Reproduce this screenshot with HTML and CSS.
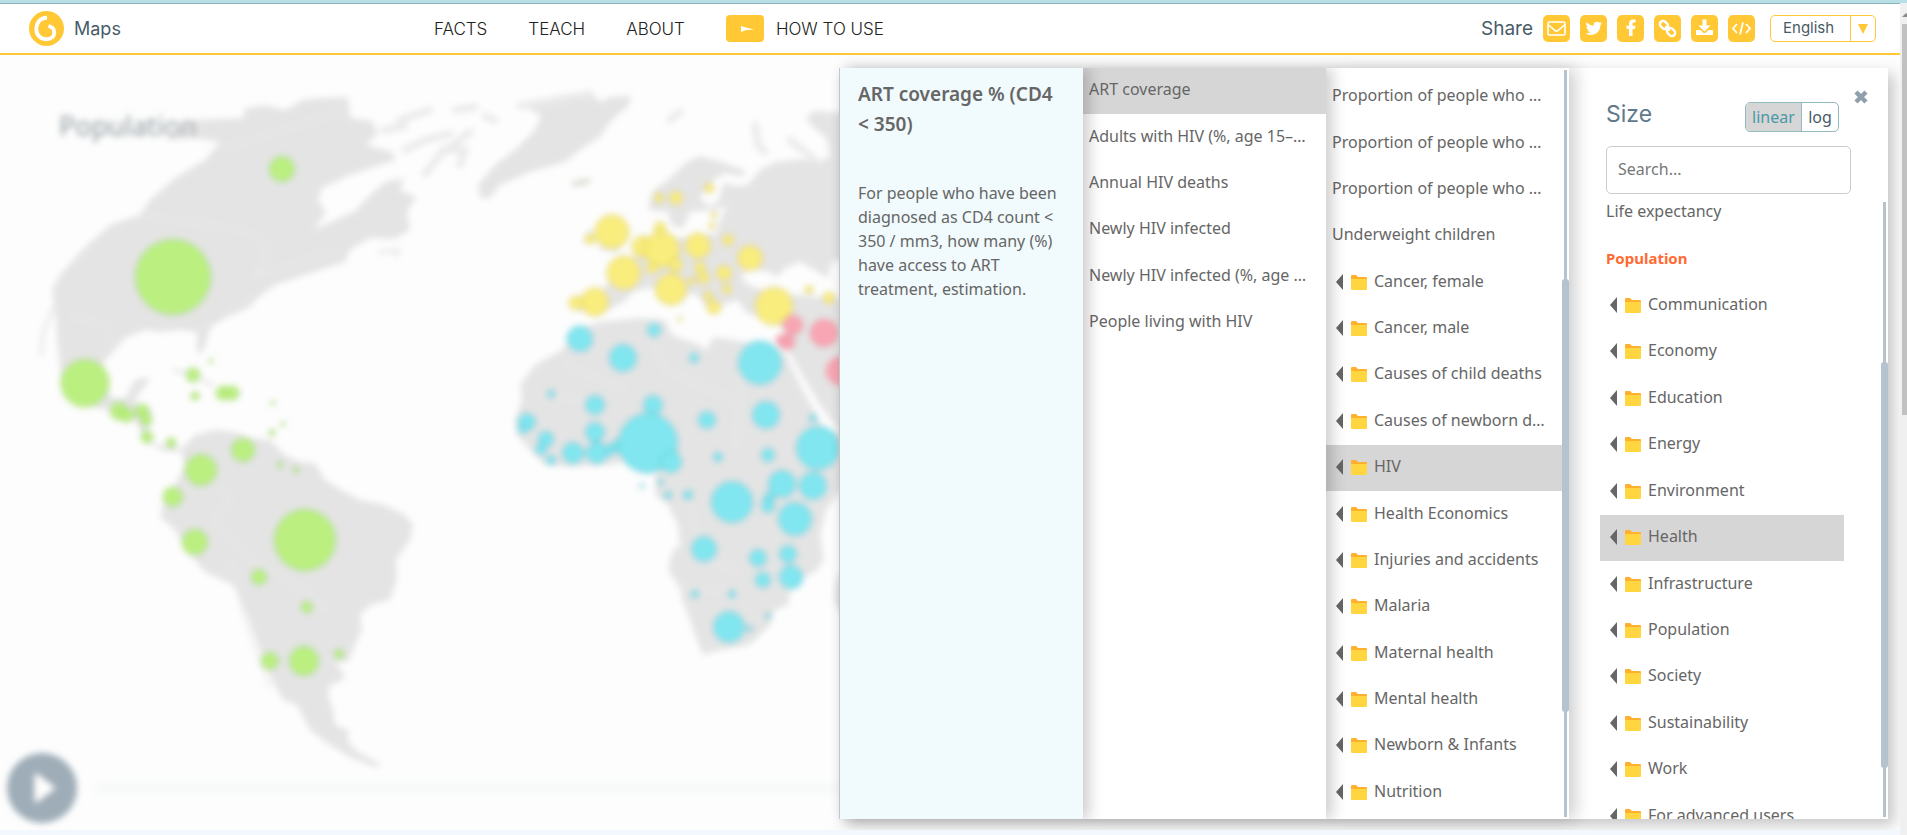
FILE: index.html
```html
<!DOCTYPE html>
<html lang="en">
<head>
<meta charset="utf-8">
<title>Maps</title>
<link rel="stylesheet" href="styles.css">
</head>
<body>
<svg class="defs" aria-hidden="true">
  <symbol id="folder" viewBox="0 0 31 16">
    <path d="M7 0v16L0 8z" fill="#666"/>
    <path d="M15 2q0-1 1-1h4l2 2h8q1 0 1 1v4H15z" fill="#ffb02e"/>
    <path d="M15 5h15q1 0 1 1V15q0 1-1 1H16q-1 0-1-1z" fill="#ffd640"/>
  </symbol>
</svg>
<div class="page">
  <div class="content">
    <header class="header">
      <a class="brand" href="#">
        <svg class="logo" viewBox="0 0 36 36" aria-hidden="true">
          <circle cx="18" cy="18" r="18" fill="#ffc834"/>
          <path d="M18.500 7C10 7 7.500 14 7.500 18.500C7.500 25 12 29 17.500 29C23.500 29 26 25.500 26 22C26 18.500 23.500 16 20 15.500" fill="none" stroke="#fff" stroke-width="4"/>
        </svg>
        <span>Maps</span>
      </a>
      <nav class="nav">
        <a href="#">FACTS</a>
        <a href="#">TEACH</a>
        <a href="#">ABOUT</a>
        <a class="how" href="#">
          <svg viewBox="0 0 38 27" aria-hidden="true"><rect width="38" height="27" rx="4" fill="#ffc834"/><path d="M15 11l5 1.500l8 2l-8 .5l-5 2z" fill="#fff"/></svg>
          <span>HOW TO USE</span>
        </a>
      </nav>
      <div class="share">
        <span class="share-label">Share</span>
        <button class="share-btn" aria-label="Mail"><svg viewBox="0 0 27 27"><rect x="5" y="7" width="17" height="13" rx="1.500" fill="none" stroke="#fff" stroke-width="1.600"/><path d="M5 9.500l7 6q1.500 1 3 0l7-6" fill="none" stroke="#fff" stroke-width="1.600"/></svg></button>
        <button class="share-btn" aria-label="Twitter"><svg viewBox="0 0 27 27"><path fill="#fff" d="M22 8.300q-.9.400-1.900.500q1-.600 1.400-1.800q-1 .6-2.100.8a3.400 3.400 0 0 0-5.800 3q-4-.2-6.900-3.500q-1.400 2.700 1 4.500q-.8 0-1.500-.4q.1 2.600 2.700 3.300q-.7.200-1.500.1q.8 2.100 3.100 2.300q-2.200 1.700-5 1.400q2.500 1.500 5.300 1.500c6 0 9.700-4.700 9.600-9.900q.9-.7 1.600-1.800z"/></svg></button>
        <button class="share-btn" aria-label="Facebook"><svg viewBox="0 0 27 27"><path fill="#fff" d="M12 21v-7H9.500v-3.200H12V8.500C12 5.800 13.700 4.500 16 4.500l2.500.1v2.900H17c-1.200 0-1.500.6-1.500 1.500v1.800h2.900L18 14h-2.500v7z"/></svg></button>
        <button class="share-btn" aria-label="Link"><svg viewBox="0 0 27 27"><g fill="none" stroke="#fff" stroke-width="2.400" transform="rotate(45 13.500 13.500)"><rect x="4" y="10.300" width="9" height="6.400" rx="3.200"/><rect x="14" y="10.300" width="9" height="6.400" rx="3.200"/><path d="M10.500 13.500h6"/></g></svg></button>
        <button class="share-btn" aria-label="Download"><svg viewBox="0 0 27 27"><path fill="#fff" d="M11.500 4.500h4v6h4l-6 6l-6-6h4z"/><path fill="#fff" d="M5 15h4.500l2.500 2.500q1.500 1 3 0l2.500-2.500H22v5H5z"/></svg></button>
        <button class="share-btn" aria-label="Embed"><svg viewBox="0 0 27 27"><path d="M9 9l-4 4.500l4 4.500M18 9l4 4.500l-4 4.500M15 7.500l-3 12" fill="none" stroke="#fff" stroke-width="1.800"/></svg></button>
        <div class="lang">
          <select aria-label="Language"><option>English</option></select>
          <span class="lang-arrow"><svg viewBox="0 0 10 10" aria-hidden="true"><path d="M0 0h10l-5 10z" fill="#ffc834"/></svg></span>
        </div>
      </div>
    </header>

    <main class="stage">
      <svg class="map" viewBox="0 55 1900 775" preserveAspectRatio="xMinYMin slice" aria-label="World map of population">
        <defs><filter id="soft" x="-5%" y="-5%" width="110%" height="110%"><feGaussianBlur stdDeviation="3"/></filter></defs>
        <g filter="url(#soft)">
          <g fill="#e4e4e4">
            <path d="M195 120L245 118L243 109L265 105L285 110L305 99L348 97L350 118L372 121L378 133L366 145L392 152L396 160L350 175L322 188L318 200L326 212L314 230L335 220L355 211L370 195L385 182L404 178L400 190L416 197L407 212L410 230L395 239L370 238L350 250L345 262L305 275L275 285L258 298L248 308L225 318L210 328L204 350L197 355L197 332L180 330L160 332L145 330L125 338L115 350L103 362L105 385L112 398L125 398L135 380L150 377L145 386L137 396L135 402L152 411L151 425L147 430L153 443L172 448L180 445L178 452L160 450L145 440L135 420L110 410L80 405L62 390L60 365L57 340L56 315L52 290L60 275L82 250L110 225L140 215L150 200L175 178L205 160L220 142L195 138L165 140Z"/>
            <path d="M480 198L478 185L495 165L515 150L535 130L541 116L527 107L560 95L590 92L600 102L610 97L632 96L628 106L610 122L600 137L580 150L565 162L530 172L500 185L490 198Z"/>
            <path d="M648 210L652 192L670 178L685 163L700 156L722 162L746 171L742 177L725 173L708 184L700 198L708 206L718 202L724 182L735 186L748 185L760 170L775 162L800 159L818 163L830 156L826 138L806 120L812 111L850 113L850 290L800 262L785 268L775 280L785 294L850 300L850 450L835 425L822 408L805 380L788 350L788 330L770 322L745 312L738 300L720 306L712 315L700 298L690 292L682 303L660 286L635 291L622 303L600 314L578 311L574 298L600 293L612 278L625 262L645 250L665 240L690 236L716 234L722 215L728 207L710 210L690 212L683 228L672 226L668 212Z"/>
            <path d="M583 244L586 233L593 230L594 242ZM600 250L599 225L606 216L617 240L620 252Z"/>
            <path d="M562 350L575 330L600 322L640 318L665 320L672 335L700 345L706 350L714 337L745 342L772 345L786 355L800 385L814 410L822 426L850 440L850 480L826 510L820 535L824 560L815 572L796 580L790 592L788 605L775 610L770 625L750 645L720 650L703 655L697 640L690 620L682 600L680 588L668 570L672 552L680 545L678 525L668 505L655 495L655 480L658 465L635 460L610 465L570 467L545 465L530 450L517 435L515 420L522 400L520 385L535 365Z"/>
            <path d="M195 435L215 430L235 432L250 438L270 440L285 455L300 462L315 463L325 480L345 492L360 500L385 505L405 515L413 525L410 540L396 560L397 580L390 600L370 605L360 615L362 630L355 645L348 662L335 662L345 675L340 682L330 685L328 695L333 710L335 725L348 730L348 742L358 752L382 765L375 767L350 757L330 745L310 730L297 705L283 700L272 680L260 650L245 610L233 585L205 572L190 555L175 530L160 517L163 505L178 480L185 465L180 450Z"/>
            <path d="M836 580L845 570L850 615L840 612L834 600Z"/>
          </g>
          <g fill="none" stroke="#eaeaea" stroke-width="7" stroke-linecap="round">
            <path d="M384 130L405 126M400 120L430 110M405 150L425 140L450 134M425 174L440 155L470 132M442 150L465 150L460 165M455 110L475 107M485 116L495 120M520 106L590 94M670 120L680 112M755 125L758 145L765 152M790 140L815 160"/>
            <path d="M55 305L43 333L41 355M175 371L190 373L212 385M222 394L240 394M380 252L398 250L396 256" stroke-width="4"/>
            <path d="M574 184L588 181" stroke="#dadad2" stroke-width="5"/>
          </g>
          <g fill="none" stroke="#e9e9e9" stroke-width="2">
            <path d="M145 216L245 230L265 245L265 265L250 278L335 250M225 148L340 112M70 315L105 325L115 350M205 470L230 500L215 520L250 560L290 580L325 610M230 560L245 620L270 690M565 365L625 390M655 345L665 370L700 385L735 400M740 350V405L735 450M535 395L590 400M690 500L700 560L740 570M680 590H735"/>
          </g>
          <ellipse cx="762" cy="280" rx="20" ry="9" fill="#fdfdfd" transform="rotate(12 762 280)"/>
          <ellipse cx="838" cy="275" rx="9" ry="15" fill="#fdfdfd"/>
          <g class="bubbles" fill="#b9ef7c" stroke="#7fae50">
            <circle cx="173" cy="277" r="38"/><circle cx="282" cy="169" r="13"/><circle cx="85" cy="383" r="24"/><circle cx="193" cy="375" r="7"/><circle cx="211" cy="361" r="2"/><circle cx="195" cy="396" r="4"/><circle cx="223" cy="393" r="7"/><circle cx="232" cy="393" r="7"/><circle cx="119" cy="411" r="9"/><circle cx="127" cy="415" r="7"/><circle cx="142" cy="411" r="7"/><circle cx="146" cy="420" r="6"/><circle cx="147" cy="437" r="6"/><circle cx="171" cy="443" r="5"/><circle cx="243" cy="450" r="12"/><circle cx="201" cy="470" r="16"/><circle cx="173" cy="497" r="10"/><circle cx="195" cy="542" r="13"/><circle cx="305" cy="540" r="31"/><circle cx="280" cy="465" r="3"/><circle cx="296" cy="470" r="3"/><circle cx="273" cy="403" r="2"/><circle cx="272" cy="433" r="3"/><circle cx="283" cy="424" r="2"/><circle cx="259" cy="577" r="8"/><circle cx="307" cy="607" r="6"/><circle cx="270" cy="661" r="9"/><circle cx="304" cy="661" r="15"/><circle cx="339" cy="654" r="5"/>
          </g>
          <g class="bubbles" fill="#f9ec79" stroke="#b5a63c">
            <circle cx="612" cy="232" r="17"/><circle cx="590" cy="239" r="5"/><circle cx="624" cy="273" r="17"/><circle cx="659" cy="198" r="5"/><circle cx="676" cy="198" r="7"/><circle cx="709" cy="188" r="5"/><circle cx="714" cy="215" r="3"/><circle cx="712" cy="226" r="3"/><circle cx="660" cy="228" r="6"/><circle cx="643" cy="247" r="11"/><circle cx="662" cy="250" r="18"/><circle cx="698" cy="246" r="13"/><circle cx="728" cy="240" r="6"/><circle cx="750" cy="258" r="13"/><circle cx="724" cy="273" r="8"/><circle cx="700" cy="268" r="6"/><circle cx="652" cy="268" r="6"/><circle cx="676" cy="265" r="7"/><circle cx="671" cy="289" r="16"/><circle cx="595" cy="302" r="14"/><circle cx="576" cy="303" r="7"/><circle cx="774" cy="306" r="19"/><circle cx="727" cy="289" r="5"/><circle cx="704" cy="278" r="6"/><circle cx="708" cy="296" r="5"/><circle cx="714" cy="307" r="7"/><circle cx="680" cy="319" r="2"/><circle cx="692" cy="281" r="4"/><circle cx="829" cy="298" r="6"/><circle cx="809" cy="290" r="4"/>
          </g>
          <g class="bubbles" fill="#f9a3b2" stroke="#c06c7b">
            <circle cx="793" cy="325" r="10"/><circle cx="787" cy="342" r="8"/><circle cx="781" cy="340" r="5"/><circle cx="824" cy="333" r="14"/><circle cx="840" cy="371" r="14"/>
          </g>
          <g class="bubbles" fill="#7de5ef" stroke="#45a3b0">
            <circle cx="580" cy="339" r="13"/><circle cx="654" cy="330" r="7"/><circle cx="623" cy="358" r="14"/><circle cx="694" cy="358" r="5"/><circle cx="760" cy="363" r="22"/><circle cx="551" cy="394" r="4"/><circle cx="595" cy="405" r="10"/><circle cx="653" cy="405" r="10"/><circle cx="707" cy="420" r="9"/><circle cx="766" cy="415" r="14"/><circle cx="527" cy="422" r="9"/><circle cx="523" cy="429" r="5"/><circle cx="546" cy="439" r="8"/><circle cx="541" cy="449" r="6"/><circle cx="551" cy="460" r="5"/><circle cx="573" cy="453" r="11"/><circle cx="595" cy="432" r="10"/><circle cx="597" cy="453" r="11"/><circle cx="610" cy="450" r="6"/><circle cx="618" cy="446" r="7"/><circle cx="648" cy="443" r="30"/><circle cx="671" cy="462" r="11"/><circle cx="718" cy="457" r="5"/><circle cx="768" cy="455" r="7"/><circle cx="818" cy="448" r="22"/><circle cx="813" cy="418" r="4"/><circle cx="782" cy="484" r="14"/><circle cx="813" cy="486" r="14"/><circle cx="769" cy="498" r="6"/><circle cx="768" cy="506" r="7"/><circle cx="732" cy="502" r="21"/><circle cx="661" cy="482" r="3"/><circle cx="668" cy="495" r="4"/><circle cx="688" cy="495" r="5"/><circle cx="642" cy="486" r="2"/><circle cx="795" cy="519" r="17"/><circle cx="704" cy="549" r="13"/><circle cx="758" cy="558" r="9"/><circle cx="788" cy="554" r="9"/><circle cx="791" cy="577" r="12"/><circle cx="763" cy="580" r="8"/><circle cx="695" cy="594" r="4"/><circle cx="732" cy="594" r="4"/><circle cx="729" cy="627" r="16"/><circle cx="768" cy="616" r="3"/><circle cx="750" cy="629" r="3"/>
          </g>
          <text class="map-title" x="59" y="136">Population</text>
          <rect x="94" y="783" width="1700" height="12" fill="#f8f9f9"/>
          <circle cx="42" cy="788" r="35" fill="#9fadb8"/>
          <path d="M35 773V803L55 788Z" fill="#fff"/>
        </g>
      </svg>

      <section class="panels">
        <article class="panel info">
          <h2>ART coverage % (CD4 &lt; 350)</h2>
          <p>For people who have been diagnosed as CD4 count &lt; 350 / mm3, how many (%) have access to ART treatment, estimation.</p>
        </article>

        <div class="panel leaves">
          <ul class="rows">
            <li class="on"><button>ART coverage</button></li>
            <li><button>Adults with HIV (%, age 15–…</button></li>
            <li><button>Annual HIV deaths</button></li>
            <li><button>Newly HIV infected</button></li>
            <li><button>Newly HIV infected (%, age …</button></li>
            <li><button>People living with HIV</button></li>
          </ul>
        </div>

        <div class="panel branch">
          <ul class="rows">
            <li><button>Proportion of people who …</button></li>
            <li><button>Proportion of people who …</button></li>
            <li><button>Proportion of people who …</button></li>
            <li><button>Underweight children</button></li>
            <li><button><svg class="fold"><use href="#folder"/></svg>Cancer, female</button></li>
            <li><button><svg class="fold"><use href="#folder"/></svg>Cancer, male</button></li>
            <li><button><svg class="fold"><use href="#folder"/></svg>Causes of child deaths</button></li>
            <li><button><svg class="fold"><use href="#folder"/></svg>Causes of newborn d…</button></li>
            <li class="on"><button><svg class="fold"><use href="#folder"/></svg>HIV</button></li>
            <li><button><svg class="fold"><use href="#folder"/></svg>Health Economics</button></li>
            <li><button><svg class="fold"><use href="#folder"/></svg>Injuries and accidents</button></li>
            <li><button><svg class="fold"><use href="#folder"/></svg>Malaria</button></li>
            <li><button><svg class="fold"><use href="#folder"/></svg>Maternal health</button></li>
            <li><button><svg class="fold"><use href="#folder"/></svg>Mental health</button></li>
            <li><button><svg class="fold"><use href="#folder"/></svg>Newborn &amp; Infants</button></li>
            <li><button><svg class="fold"><use href="#folder"/></svg>Nutrition</button></li>
          </ul>
          <div class="track"><div class="thumb"></div></div>
        </div>

        <div class="panel root">
          <div class="root-head">
            <h1>Size</h1>
            <div class="scale">
              <button class="on">linear</button><button>log</button>
            </div>
            <button class="close" aria-label="Close"><svg viewBox="0 0 14 14"><path d="M2 2l10 10M12 2L2 12" stroke="#8f9fac" stroke-width="4.500"/></svg></button>
          </div>
          <input class="search" type="text" placeholder="Search..." aria-label="Search">
          <div class="root-list">
            <ul class="rows">
              <li><button>Life expectancy</button></li>
              <li class="current"><button>Population</button></li>
              <li><button><svg class="fold"><use href="#folder"/></svg>Communication</button></li>
              <li><button><svg class="fold"><use href="#folder"/></svg>Economy</button></li>
              <li><button><svg class="fold"><use href="#folder"/></svg>Education</button></li>
              <li><button><svg class="fold"><use href="#folder"/></svg>Energy</button></li>
              <li><button><svg class="fold"><use href="#folder"/></svg>Environment</button></li>
              <li class="on"><button><svg class="fold"><use href="#folder"/></svg>Health</button></li>
              <li><button><svg class="fold"><use href="#folder"/></svg>Infrastructure</button></li>
              <li><button><svg class="fold"><use href="#folder"/></svg>Population</button></li>
              <li><button><svg class="fold"><use href="#folder"/></svg>Society</button></li>
              <li><button><svg class="fold"><use href="#folder"/></svg>Sustainability</button></li>
              <li><button><svg class="fold"><use href="#folder"/></svg>Work</button></li>
              <li><button><svg class="fold"><use href="#folder"/></svg>For advanced users</button></li>
            </ul>
            <div class="track"><div class="thumb"></div></div>
          </div>
        </div>
      </section>
    </main>
    <div class="foot"></div>
  </div>
  <div class="page-scroll">
    <svg viewBox="0 0 7 6" aria-hidden="true"><path d="M2 5l4-4l1 1v3z" fill="#8a8a8a"/></svg>
    <div class="page-thumb"></div>
  </div>
</div>
</body>
</html>
```

FILE: styles.css
```css
* { box-sizing: border-box; }
body {
  margin: 0;
  height: 100vh;
  overflow: hidden;
  background: #fdfdfd;
  color: #666;
  font: 16px/24px "Noto Sans", "Open Sans", sans-serif;
}
button {
  padding: 0;
  border: 0;
  background: none;
  color: inherit;
  font: inherit;
  cursor: pointer;
}
svg { display: block; }
.defs { position: absolute; width: 0; height: 0; }

.page {
  display: flex;
  height: 100%;
  border-top: 3px solid #b7dfe5;
}
.content {
  flex: 1;
  min-width: 0;
  display: flex;
  flex-direction: column;
  border-top: 1px solid #8ab5b8;
}

/* header */
.header {
  display: flex;
  align-items: center;
  height: 51px;
  padding: 0 24px 0 29px;
  background: #fff;
  border-bottom: 2px solid #ffc834;
  color: #485c68;
  font-family: Inter, Roboto, sans-serif;
}
.brand {
  display: flex;
  align-items: center;
  gap: 10px;
  width: 405px;
  color: inherit;
  font-size: 18px;
  text-decoration: none;
}
.logo { width: 35px; height: 35px; }
.nav { display: flex; align-items: center; gap: 41px; }
.nav a {
  color: #222;
  font-size: 17px;
  font-weight: 300;
  text-decoration: none;
}
.nav .how { display: flex; align-items: center; gap: 12px; }
.how svg { width: 38px; height: 27px; }
.share {
  display: flex;
  align-items: center;
  gap: 10px;
  margin-left: auto;
}
.share-label { font-size: 19px; }
.share-btn {
  width: 27px;
  height: 27px;
  border-radius: 5px;
  background: #ffc834;
}
.lang {
  display: flex;
  width: 106px;
  height: 27px;
  margin-left: 5px;
  border: 1px solid #ffc834;
  border-radius: 5px;
}
.lang select {
  flex: 1;
  appearance: none;
  padding: 0 0 2px 12px;
  border: 0;
  background: none;
  color: inherit;
  font: 15px/22px Inter, Roboto, sans-serif;
}
.lang-arrow {
  display: flex;
  align-items: center;
  justify-content: center;
  width: 25px;
  border-left: 1px solid #ffc834;
}
.lang-arrow svg { width: 10px; height: 10px; }

/* map */
.stage {
  position: relative;
  flex: 1;
  display: flex;
  justify-content: flex-end;
  min-height: 0;
  overflow: hidden;
  padding: 13px 12px 11px 0;
}
.map { position: absolute; inset: 0; width: 100%; height: 100%; }
.bubbles { fill-opacity: 0.97; stroke-width: 1; stroke-opacity: 0.6; }
.map-title { fill: #8f999e; font-size: 27px; }
.foot { height: 5px; background: #f2f8fd; }

/* cascading indicator menu */
.panels {
  position: relative;
  display: flex;
  border-left: 1px solid #ccc;
  box-shadow: 6px 6px 14px rgba(0, 0, 0, 0.22);
}
.panel { position: relative; width: 243px; background: #fff; }
.info {
  z-index: 3;
  padding: 11px 18px;
  background: #f1fafc;
  box-shadow: 6px 0 14px rgba(0, 0, 0, 0.2);
}
.info h2 {
  margin: 0 0 42px;
  font-size: 19px;
  font-weight: 600;
  line-height: 30px;
}
.info p { margin: 0; }
.leaves { z-index: 2; box-shadow: 6px 0 14px rgba(0, 0, 0, 0.2); }
.branch {
  z-index: 1;
  padding: 6px 0 3px;
  box-shadow: 6px 0 16px rgba(0, 0, 0, 0.2);
}
.rows {
  display: grid;
  grid-template-rows: repeat(16, 1fr);
  height: 100%;
  margin: 0;
  padding: 0;
  list-style: none;
}
.leaves .rows { padding-bottom: 9px; }
.branch .rows { margin-right: 7px; }
.rows li { min-height: 0; }
.rows button {
  display: flex;
  align-items: center;
  width: 100%;
  height: 100%;
  padding: 0 0 4px 6px;
  text-align: left;
  white-space: nowrap;
}
.rows .on { background: #d6d6d6; }
.rows .current { color: #ff6a33; font-size: 15px; font-weight: bold; }
.fold { flex: none; width: 31px; height: 16px; margin: 2px 7px 0 4px; }
.track {
  position: absolute;
  top: 2px;
  right: 2px;
  bottom: 2px;
  width: 3px;
  background: #b5c3ce;
}
.thumb {
  position: absolute;
  top: 28%;
  left: -2px;
  width: 7px;
  height: 58%;
  border-radius: 3px;
  background: #b5c3ce;
}

/* root column */
.root {
  display: flex;
  flex-direction: column;
  width: 319px;
  padding-top: 22px;
}
.root-head {
  display: flex;
  align-items: flex-start;
  padding: 0 20px 0 37px;
}
.root h1 {
  flex: 1;
  margin: 8px 0 0;
  color: #5f7a8d;
  font: 400 23px/32px Inter, Roboto, sans-serif;
}
.scale {
  display: flex;
  width: 94px;
  height: 30px;
  margin: 12px 15px 0 0;
  overflow: hidden;
  border: 1px solid #92b8c0;
  border-radius: 5px;
  color: #485c68;
}
.scale button { flex: 1; }
.scale .on {
  flex: none;
  width: 56px;
  border-right: 1px solid #92b8c0;
  background: #d6d6d6;
  color: #4a98a8;
}
.close { width: 14px; height: 14px; }
.search {
  width: 245px;
  height: 48px;
  margin: 14px 0 8px 37px;
  padding: 0 11px 2px;
  border: 1px solid #ccc;
  border-radius: 5px;
  background: #fff;
  color: #666;
  font: inherit;
}
.search::placeholder { color: #777; opacity: 1; }
.root-list {
  position: relative;
  flex: 1;
  min-height: 0;
  overflow: hidden;
}
.root-list .rows {
  grid-template-rows: repeat(14, 1fr);
  width: 244px;
  height: calc(100% + 33px);
  margin: -12px 0 0 31px;
}
.root-list .track { top: 0; }
.root-list .thumb { top: 26%; height: 66%; }

/* browser scroll bar */
.page-scroll {
  width: 7px;
  padding-top: 9px;
  background: #f0f0f0;
}
.page-thumb {
  height: 391px;
  margin: 6px 0 0 2px;
  background: #c1c1c1;
}
```
